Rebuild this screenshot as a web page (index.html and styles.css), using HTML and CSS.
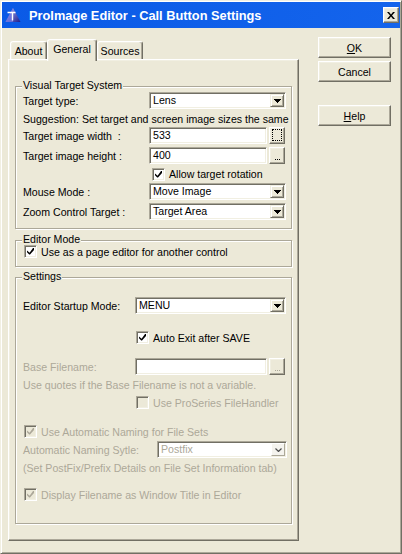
FILE: index.html
```html
<!DOCTYPE html>
<html>
<head>
<meta charset="utf-8">
<link rel="stylesheet" href="styles.css">
</head>
<body>
<div class="window">
  <div class="titlebar">
    <svg class="app-icon" width="16" height="16" viewBox="0 0 16 16">
      <defs>
        <linearGradient id="pyr" x1="0" y1="0" x2="1" y2="1">
          <stop offset="0" stop-color="#b8c0ff"/>
          <stop offset="1" stop-color="#1c1c8c"/>
        </linearGradient>
      </defs>
      <polygon points="8,1 15.5,15 0.5,15" fill="url(#pyr)"/>
      <polygon points="8,1 8,15 0.5,15" fill="#6f78e6" opacity="0.7"/>
      <path d="M2.5 5.5h8M7.5 5.5v8" stroke="#fff" stroke-width="1.4"/>
    </svg>
    <span class="title">ProImage Editor - Call Button Settings</span>
    <div class="close-btn">
      <svg width="8" height="7" viewBox="0 0 8 7"><path d="M0 0h2l2 2.4L6 0h2L5 3.5 8 7H6L4 4.6 2 7H0l3-3.5z" fill="#000"/></svg>
    </div>
  </div>

  <div class="client">
    <div class="tabs-area">
      <div class="tabstrip">
        <div class="tab tab-about">About</div>
        <div class="tab tab-general selected">General</div>
        <div class="tab tab-sources">Sources</div>
      </div>
      <div class="panel">

        <div class="group group-visual">
          <div class="group-label">Visual Target System</div>
          <div class="row ctl-row">
            <span class="lbl lbl-wide">Target type:</span>
            <div class="combo combo-v"><span class="combo-text">Lens</span><span class="drop"><svg width="7" height="4" viewBox="0 0 7 4"><path d="M0 0h7v1H0zM1 1h5v1H1zM2 2h3v1H2zM3 3h1v1H3z" fill="#000"/></svg></span></div>
          </div>
          <div class="row text-row suggestion">Suggestion: Set target and screen image sizes the same</div>
          <div class="row ctl-row">
            <span class="lbl lbl-wide">Target image width &nbsp;:</span>
            <div class="field field-v">533</div>
            <div class="dots-btn"><span class="focus-rect"></span></div>
          </div>
          <div class="row ctl-row gap3">
            <span class="lbl lbl-wide">Target image height :</span>
            <div class="field field-v">400</div>
            <div class="dots-btn"><svg width="5" height="1" viewBox="0 0 5 1"><path d="M0 0h1v1H0zM2 0h1v1H2zM4 0h1v1H4z" fill="#000"/></svg></div>
          </div>
          <div class="row check-row rotation">
            <span class="checkbox"><svg width="7" height="7" viewBox="0 0 7 7"><path d="M6 0h1v2L3 6.5H2.2L0 4.2V2.4l2.6 2.3z" fill="#000"/></svg></span>
            <span class="check-label">Allow target rotation</span>
          </div>
          <div class="row ctl-row gap1">
            <span class="lbl lbl-wide">Mouse Mode :</span>
            <div class="combo combo-v"><span class="combo-text">Move Image</span><span class="drop"><svg width="7" height="4" viewBox="0 0 7 4"><path d="M0 0h7v1H0zM1 1h5v1H1zM2 2h3v1H2zM3 3h1v1H3z" fill="#000"/></svg></span></div>
          </div>
          <div class="row ctl-row gap3">
            <span class="lbl lbl-wide">Zoom Control Target :</span>
            <div class="combo combo-v"><span class="combo-text">Target Area</span><span class="drop"><svg width="7" height="4" viewBox="0 0 7 4"><path d="M0 0h7v1H0zM1 1h5v1H1zM2 2h3v1H2zM3 3h1v1H3z" fill="#000"/></svg></span></div>
          </div>
        </div>

        <div class="group group-editor">
          <div class="group-label">Editor Mode</div>
          <div class="row check-row page-editor">
            <span class="checkbox"><svg width="7" height="7" viewBox="0 0 7 7"><path d="M6 0h1v2L3 6.5H2.2L0 4.2V2.4l2.6 2.3z" fill="#000"/></svg></span>
            <span class="check-label">Use as a page editor for another control</span>
          </div>
        </div>

        <div class="group group-settings">
          <div class="group-label">Settings</div>
          <div class="row ctl-row startup">
            <span class="lbl lbl-mid">Editor Startup Mode:</span>
            <div class="combo combo-s"><span class="combo-text">MENU</span><span class="drop"><svg width="7" height="4" viewBox="0 0 7 4"><path d="M0 0h7v1H0zM1 1h5v1H1zM2 2h3v1H2zM3 3h1v1H3z" fill="#000"/></svg></span></div>
          </div>
          <div class="row check-row autoexit">
            <span class="checkbox"><svg width="7" height="7" viewBox="0 0 7 7"><path d="M6 0h1v2L3 6.5H2.2L0 4.2V2.4l2.6 2.3z" fill="#000"/></svg></span>
            <span class="check-label">Auto Exit after SAVE</span>
          </div>
          <div class="row ctl-row basefile disabled">
            <span class="lbl lbl-mid">Base Filename:</span>
            <div class="field field-s"></div>
            <div class="dots-btn"><svg width="5" height="1" viewBox="0 0 5 1"><path d="M0 0h1v1H0zM2 0h1v1H2zM4 0h1v1H4z" fill="#aca899"/></svg></div>
          </div>
          <div class="row text-row quotes disabled">Use quotes if the Base Filename is not a variable.</div>
          <div class="row check-row proseries disabled">
            <span class="checkbox"></span>
            <span class="check-label">Use ProSeries FileHandler</span>
          </div>
          <div class="row check-row autonaming disabled">
            <span class="checkbox"><svg width="7" height="7" viewBox="0 0 7 7"><path d="M6 0h1v2L3 6.5H2.2L0 4.2V2.4l2.6 2.3z" fill="#aca899"/></svg></span>
            <span class="check-label">Use Automatic Naming for File Sets</span>
          </div>
          <div class="row ctl-row style-row disabled">
            <span class="lbl lbl-style">Automatic Naming Sytle:</span>
            <div class="combo combo-n"><span class="combo-text">Postfix</span><span class="drop drop-flat"><svg width="7" height="4" viewBox="0 0 7 4"><path d="M0.5 0.5l3 3 3-3" fill="none" stroke="#4d4d4d" stroke-width="1.2"/></svg></span></div>
          </div>
          <div class="row text-row postfix-note disabled">(Set PostFix/Prefix Details on File Set Information tab)</div>
          <div class="row check-row display-title disabled">
            <span class="checkbox"><svg width="7" height="7" viewBox="0 0 7 7"><path d="M6 0h1v2L3 6.5H2.2L0 4.2V2.4l2.6 2.3z" fill="#aca899"/></svg></span>
            <span class="check-label">Display Filename as Window Title in Editor</span>
          </div>
        </div>

      </div>
    </div>

    <div class="buttons">
      <div class="btn"><u>O</u>K</div>
      <div class="btn btn-cancel">Cancel</div>
      <div class="btn btn-help"><u>H</u>elp</div>
    </div>
  </div>
</div>
</body>
</html>
```

FILE: styles.css
```css
html, body {
  margin: 0;
  padding: 0;
  background: #ece9d8;
}

body {
  font-family: "Liberation Sans", Arial, sans-serif;
  font-size: 10.6px;
  color: #000;
}

.window {
  width: 402px;
  height: 554px;
  box-sizing: border-box;
  border: 1px solid;
  border-color: #f1efe2 #716f64 #716f64 #f1efe2;
  box-shadow: inset 1px 1px 0 #fff, inset -1px -1px 0 #aca899;
  padding: 1px;
  background: #ece9d8;
  overflow: hidden;
}

/* ---------- title bar ---------- */
.titlebar {
  height: 26px;
  display: flex;
  align-items: center;
  padding: 0 1px 0 3px;
  background: linear-gradient(to right, #0a5ae6, #1464ec);
}

.app-icon {
  flex: none;
  display: block;
}

.title {
  margin-left: 8px;
  color: #fff;
  font-weight: bold;
  font-size: 12.8px;
  white-space: nowrap;
}

.close-btn {
  margin-left: auto;
  width: 16px;
  height: 16px;
  box-sizing: border-box;
  border: 1px solid;
  border-color: #fff #716f64 #716f64 #fff;
  box-shadow: inset -1px -1px 0 #aca899, inset 1px 1px 0 #f1efe2;
  background: #ece9d8;
  display: flex;
  align-items: center;
  justify-content: center;
}

.close-btn svg {
  display: block;
}

/* ---------- client area ---------- */
.client {
  display: flex;
  padding: 9px 0 0 6px;
}

.tabs-area {
  width: 291px;
  padding-top: 2px;
  flex: none;
}

.tabstrip {
  display: flex;
  align-items: flex-end;
  height: 20px;
  padding-left: 2px;
}

.tab {
  height: 18px;
  box-sizing: border-box;
  border: 1px solid;
  border-bottom: 0;
  border-color: #fff #716f64 transparent #fff;
  box-shadow: inset -1px 0 0 #aca899, inset 1px 1px 0 #f1efe2;
  border-radius: 3px 3px 0 0;
  background: #ece9d8;
  display: flex;
  align-items: center;
  justify-content: center;
  padding-top: 1px;
  white-space: nowrap;
}

.tab-about { width: 37px; }
.tab-general { width: 50px; }
.tab-sources { width: 46px; }

.tab.selected {
  height: 22px;
  margin-bottom: -2px;
  padding-top: 0;
  padding-bottom: 4px;
  position: relative;
  z-index: 1;
}

.panel {
  height: 482px;
  box-sizing: border-box;
  border: 1px solid;
  border-color: #fff #716f64 #716f64 #fff;
  box-shadow: inset -1px -1px 0 #aca899, inset 1px 1px 0 #f1efe2;
  padding: 26px 6px 0 6px;
}

/* ---------- group boxes ---------- */
.group {
  border: 1px solid #aca899;
  box-shadow: inset 1px 1px 0 #fff, 1px 1px 0 #fff;
  padding: 0 5px 8px 7px;
}

.group-editor {
  margin-top: 11px;
}

.group-settings {
  margin-top: 10px;
  padding-bottom: 22px;
}

.group-label {
  margin-top: -8px;
  margin-left: -1px;
  width: fit-content;
  padding: 0 1px;
  line-height: 13px;
  background: #ece9d8;
  white-space: nowrap;
}

/* ---------- rows ---------- */
.row {
  display: flex;
  align-items: center;
  white-space: nowrap;
}

.ctl-row {
  height: 17px;
}

.text-row {
  height: 14px;
  line-height: 14px;
}

.check-row {
  height: 13px;
}

.gap1 { margin-top: 1px; }
.gap3 { margin-top: 3px; }

.suggestion {
  margin-top: 2px;
  height: 16px;
  line-height: 16px;
}

.rotation {
  margin-top: 2px;
  height: 16px;
  padding-left: 129px;
}

.page-editor {
  margin-top: -1px;
  padding-left: 1px;
}

.startup { margin-top: 14px; }
.autoexit { margin-top: 17px; padding-left: 113px; }
.basefile { margin-top: 14px; }
.quotes { margin-top: 3px; }
.proseries { margin-top: 4px; padding-left: 113px; }
.autonaming { margin-top: 16px; padding-left: 1px; }
.style-row { margin-top: 3px; }
.postfix-note { margin-top: 3px; }
.display-title { margin-top: 13px; padding-left: 1px; }

.disabled {
  color: #aca899;
}

.lbl {
  flex: none;
}

.lbl-wide { width: 126px; }
.lbl-mid { width: 112px; }
.lbl-style { width: 134px; }

/* ---------- controls ---------- */
.field,
.combo {
  height: 17px;
  box-sizing: border-box;
  border: 1px solid;
  border-color: #aca899 #fff #fff #aca899;
  box-shadow: inset 1px 1px 0 #716f64, inset -1px -1px 0 #f1efe2;
  background: #fff;
  line-height: 13px;
  flex: none;
}

.field {
  padding: 1px 0 0 3px;
}

.field-v { width: 118px; }
.field-s { width: 132px; }

.combo {
  display: flex;
  align-items: stretch;
  padding: 1px;
}

.combo-text {
  flex: 1;
  padding-left: 2px;
  line-height: 13px;
}

.combo-v { width: 137px; }
.combo-s { width: 151px; }
.combo-n { width: 130px; }

.drop {
  width: 14px;
  box-sizing: border-box;
  border: 1px solid;
  border-color: #f1efe2 #716f64 #716f64 #f1efe2;
  box-shadow: inset 1px 1px 0 #fff, inset -1px -1px 0 #aca899;
  background: #ece9d8;
  display: flex;
  align-items: center;
  justify-content: center;
  padding-left: 1px;
}

.drop svg {
  display: block;
}

.drop-flat {
  border-color: #fff #aca899 #aca899 #fff;
  box-shadow: none;
  background: #f4f3ee;
}

.dots-btn {
  width: 16px;
  height: 17px;
  margin-left: 2px;
  box-sizing: border-box;
  border: 1px solid;
  border-color: #fff #716f64 #716f64 #fff;
  box-shadow: inset -1px -1px 0 #aca899, inset 1px 1px 0 #f1efe2;
  background: #ece9d8;
  display: flex;
  align-items: flex-end;
  justify-content: center;
  padding-bottom: 3px;
  flex: none;
}

.dots-btn svg {
  display: block;
}

.focus-rect {
  width: 8px;
  height: 10px;
  border: 1px dotted #000;
  margin-bottom: -1px;
}

.checkbox {
  width: 13px;
  height: 13px;
  box-sizing: border-box;
  border: 1px solid;
  border-color: #aca899 #fff #fff #aca899;
  box-shadow: inset 1px 1px 0 #716f64, inset -1px -1px 0 #f1efe2;
  background: #fff;
  display: flex;
  align-items: center;
  justify-content: center;
  flex: none;
}

.checkbox svg {
  display: block;
}

.disabled .checkbox {
  background: #ece9d8;
}

.check-label {
  margin-left: 4px;
}

/* ---------- buttons column ---------- */
.buttons {
  margin-left: 19px;
  display: flex;
  flex-direction: column;
}

.btn {
  width: 73px;
  height: 21px;
  box-sizing: border-box;
  border: 1px solid;
  border-color: #fff #716f64 #716f64 #fff;
  box-shadow: inset -1px -1px 0 #aca899, inset 1px 1px 0 #f1efe2;
  background: #ece9d8;
  display: flex;
  align-items: center;
  justify-content: center;
}

.btn-cancel { margin-top: 3px; }
.btn-help { margin-top: 23px; }
```
